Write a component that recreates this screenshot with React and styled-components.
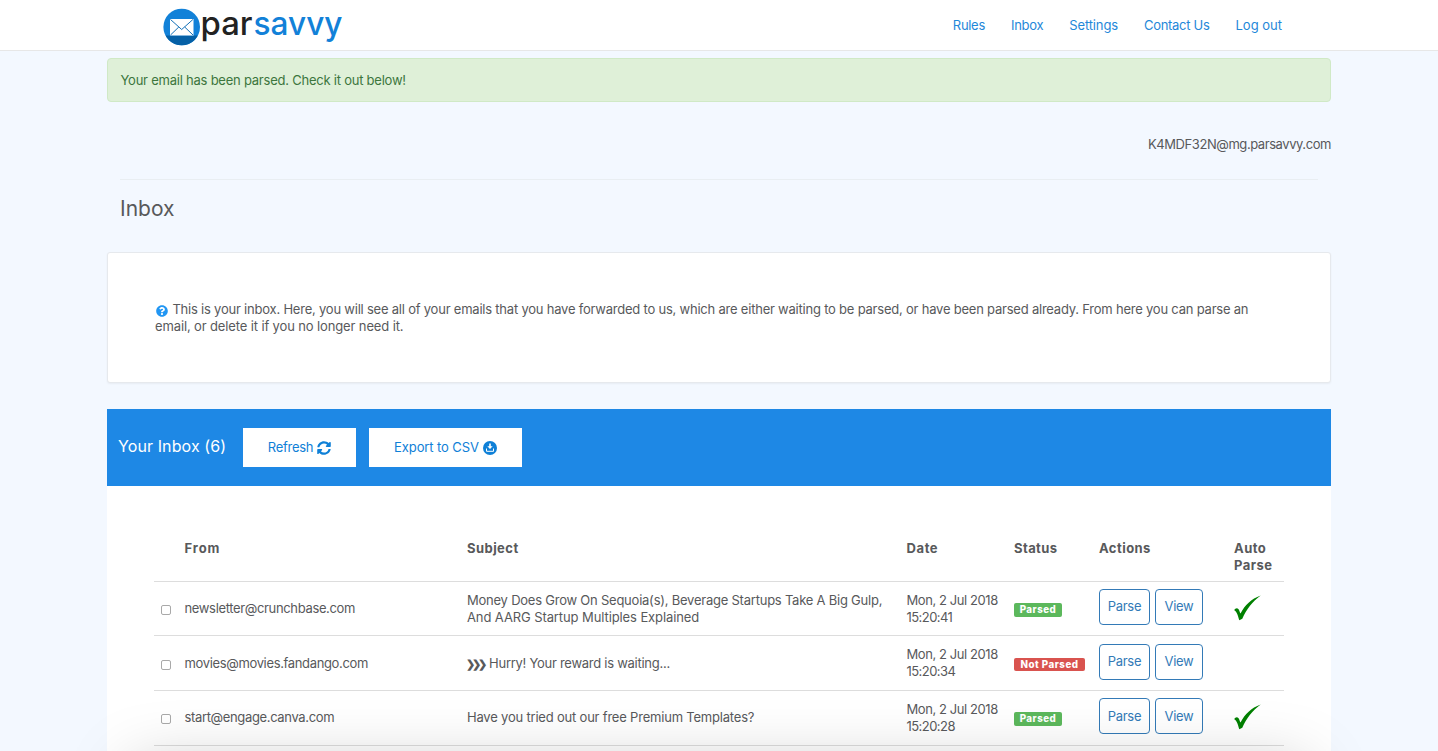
import React from 'react';
import styled, { createGlobalStyle } from 'styled-components';
import { FaSyncAlt, FaQuestionCircle } from 'react-icons/fa';

const GlobalStyle = createGlobalStyle`
* {
  box-sizing: border-box;
}
html, body, #root {
  height: 100%;
}
body {
  margin: 0;
  overflow: hidden;
  background: #f3f8ff;
  color: #58595b;
  font-family: Inter, "Liberation Sans", sans-serif;
  font-size: 13px;
  line-height: 17px;
}
`;

const Page = styled.div`
  position: relative;
  height: 751px;
  overflow: hidden;
`;

const Navbar = styled.nav`
  height: 51px;
  background: #fff;
  border-bottom: 1px solid #e7e7e7;
  display: flex;
  justify-content: space-between;
  padding: 0 156px 0 162px;
`;

const Logo = styled.svg`
  display: block;
  width: 184px;
  height: 50px;
  overflow: visible;
  font-family: Inter, sans-serif;
  font-size: 32.5px;
  font-weight: 500;
`;

const NavLinks = styled.div`
  display: flex;
  gap: 26px;
  padding-top: 17px;
`;

const NavLink = styled.a`
  color: #1f88d9;
  text-decoration: none;
  white-space: nowrap;
  letter-spacing: ${p => p.$ls || 0}px;
`;

const Content = styled.main`
  width: 1224px;
  margin: 7px auto 0;
`;

const Alert = styled.div`
  height: 44px;
  padding: 13px 12.5px;
  border: 1px solid #d0e9c6;
  border-radius: 4px;
  background: #dff0d8;
  color: #3c763d;
  letter-spacing: -.23px;
`;

const Address = styled.div`
  margin-top: 34px;
  text-align: right;
  letter-spacing: -.43px;
`;

const Divider = styled.hr`
  margin: 26px 13px 0;
  border: 0;
  border-top: 1px solid #e9eef2;
`;

const Title = styled.h1`
  margin: 17px 13px 0;
  font-size: 21px;
  line-height: 24px;
  font-weight: 400;
`;

const Panel = styled.section`
  height: 131px;
  margin-top: 31px;
  padding: 48px 47px;
  background: #fff;
  border: 1px solid #e6e9ed;
  border-radius: 3px;
  box-shadow: 0 1px 2px rgba(0, 0, 0, .05);
  svg {
    color: #2196f3;
    font-size: 12px;
    margin: 0 1px;
    vertical-align: -3px;
  }
`;

const Line = styled.div`
  white-space: nowrap;
  letter-spacing: ${p => p.$ls || 0}px;
`;

const Toolbar = styled.header`
  display: flex;
  align-items: center;
  height: 77px;
  margin-top: 26px;
  padding-left: 11px;
  background: #1e88e5;
  h2 {
    width: 125px;
    margin: 0 0 2px;
    color: #fff;
    font-size: 16px;
    font-weight: 400;
    letter-spacing: .1px;
    white-space: nowrap;
  }
`;

const ToolButton = styled.button`
  display: flex;
  align-items: center;
  justify-content: center;
  gap: 4px;
  width: ${p => p.$width}px;
  height: 39px;
  margin-right: 13px;
  padding: 0 0 1px;
  border: 0;
  background: #fff;
  color: #0f80d7;
  font: inherit;
  letter-spacing: ${p => p.$ls || 0}px;
  svg {
    margin-top: 2px;
  }
`;

const List = styled.div`
  height: 400px;
  padding: 54px 47px 0;
  background: #fff;
`;

const Row = styled.div`
  display: grid;
  grid-template-columns: 30.5px 282.5px 439.5px 107.5px 85px 135px 50px;
  align-items: center;
  height: 54.7px;
  border-top: 1px solid #ddd;
`;

const HeadRow = styled(Row)`
  align-items: start;
  height: 40.7px;
  border-top: 0;
  font-weight: 700;
`;

const Cell = styled.div`
  white-space: nowrap;
  letter-spacing: ${p => p.$ls || 0}px;
`;

const Chevrons = styled.b`
  margin: 0 2px 0 -1px;
  font-size: 11px;
  line-height: 11px;
  letter-spacing: -3.1px;
`;

const Check = styled.input`
  appearance: none;
  display: block;
  width: 10px;
  height: 10px;
  margin: 3px 0 0 7px;
  border: 1px solid #a9a9a9;
  border-radius: 2px;
  background: #fff;
`;

const Badge = styled.span`
  display: block;
  width: ${p => (p.$parsed ? 48 : 71)}px;
  height: ${p => (p.$parsed ? 14 : 13)}px;
  margin-top: 3px;
  border-radius: 2px;
  background: ${p => (p.$parsed ? '#5cb85c' : '#d9534f')};
  color: #fff;
  font-size: 9.75px;
  font-weight: 800;
  letter-spacing: .5px;
  line-height: 14px;
  text-align: center;
  white-space: nowrap;
`;

const Actions = styled.div`
  display: flex;
  gap: 5px;
  margin-top: -3.4px;
`;

const ActionButton = styled.button`
  width: ${p => p.$width}px;
  height: 36px;
  padding: 0;
  border: 1px solid #337ab7;
  border-radius: 4px;
  background: #fff;
  color: #337ab7;
  font: inherit;
  letter-spacing: -.3px;
`;

const TickIcon = styled.svg`
  margin-top: -1px;
`;

// shadow thrown up by the bar under the fold
const FoldShadow = styled.div`
  position: absolute;
  top: 769px;
  left: 133px;
  width: 1172px;
  height: 60px;
  box-shadow: 0 0 66px rgba(0, 0, 0, .25);
`;

const links = [
  { text: 'Rules', ls: -.3 },
  { text: 'Inbox', ls: -.3 },
  { text: 'Settings', ls: -.12 },
  { text: 'Contact Us', ls: -.3 },
  { text: 'Log out', ls: 0 },
];

const messages = [
  {
    from: 'newsletter@crunchbase.com',
    subject: <><Line $ls={-.23}>Money Does Grow On Sequoia(s), Beverage Startups Take A Big Gulp,</Line><Line $ls={-.1}>And AARG Startup Multiples Explained</Line></>,
    time: '15:20:41',
    parsed: true
  },
  {
    from: 'movies@movies.fandango.com',
    subject: <Line $ls={-.27}><Chevrons>❯❯❯</Chevrons> Hurry! Your reward is waiting...</Line>,
    time: '15:20:34',
    parsed: false
  },
  {
    from: 'start@engage.canva.com',
    subject: <Line $ls={-.2}>Have you tried out our free Premium Templates?</Line>,
    time: '15:20:28',
    parsed: true
  },
];

const DownloadIcon = () => (
  <svg width="14" height="14" viewBox="0 0 14 14">
    <circle cx="7" cy="7" r="7" fill="#0f80d7" />
    <path d="M6.200 2.500h1.600v2.800h1.900L7 8 4.300 5.300h1.900z" fill="#fff" />
    <path d="M3.500 7.500v2.800h7V7.500" fill="none" stroke="#fff" strokeWidth="1" />
  </svg>
);

const Tick = () => (
  <TickIcon width="28" height="26" viewBox="0 0 28 26">
    <path d="M0.300 15.200C1 13.500 3 12.800 4.300 13.900C5.200 14.700 5.700 17 6.500 18.600C11 10 17 4.200 26.700.6C18 7 12.500 14.500 8.300 23.800L5.300 25.300C4.200 21.500 3.200 17 .3 15.200Z" fill="#008000" />
  </TickIcon>
);

const App = () => {
  return (
    <Page>
      <GlobalStyle />
      <Navbar>
        <Logo viewBox="0 0 184 50">
          <clipPath id="disc"><circle cx="19.700" cy="27" r="18.300" /></clipPath>
          <circle cx="19.700" cy="27" r="18.300" fill="#1281d8" />
          <rect x="0" y="35.500" width="40" height="12" fill="#0560a6" clipPath="url(#disc)" />
          <rect x="8" y="19" width="23.500" height="16.500" fill="#fff" />
          <path d="M8.500 19.500l11.200 10 11.200-10M8.500 35l8.300-8M31 35l-8.300-8" fill="none" stroke="#1270b8" strokeWidth="1" />
          <text x="38.500" y="34.500" textLength="52" lengthAdjust="spacingAndGlyphs" fill="#222">par</text>
          <text x="91.500" y="34.500" textLength="89" lengthAdjust="spacingAndGlyphs" fill="#1281d8">savvy</text>
        </Logo>
        <NavLinks>
          {links.map(l => <NavLink key={l.text} $ls={l.ls}>{l.text}</NavLink>)}
        </NavLinks>
      </Navbar>
      <Content>
        <Alert>Your email has been parsed. Check it out below!</Alert>
        <Address>K4MDF32N@mg.parsavvy.com</Address>
        <Divider />
        <Title>Inbox</Title>
        <Panel>
          <Line $ls={-.217}>
            <FaQuestionCircle /> This is your inbox. Here, you will see all of your emails that you have forwarded to us, which are either waiting to be parsed, or have been parsed already. From here you can parse an
          </Line>
          <Line $ls={-.13}>email, or delete it if you no longer need it.</Line>
        </Panel>
        <Toolbar>
          <h2>Your Inbox (6)</h2>
          <ToolButton $width={113} $ls={-.3}>Refresh <FaSyncAlt size={14} /></ToolButton>
          <ToolButton $width={153} $ls={-.1}>Export to CSV <DownloadIcon /></ToolButton>
        </Toolbar>
        <List>
          <HeadRow>
            <Cell />
            <Cell $ls={.9}>From</Cell>
            <Cell $ls={.45}>Subject</Cell>
            <Cell $ls={.6}>Date</Cell>
            <Cell $ls={.4}>Status</Cell>
            <Cell $ls={.45}>Actions</Cell>
            <Cell $ls={.45}>Auto<br />Parse</Cell>
          </HeadRow>
          {messages.map(m => (
            <Row key={m.from}>
              <Check type="checkbox" />
              <Cell $ls={-.35}>{m.from}</Cell>
              <Cell>{m.subject}</Cell>
              <Cell>
                <Line $ls={-.42}>Mon, 2 Jul 2018</Line>
                <Line $ls={-.55}>{m.time}</Line>
              </Cell>
              <Badge $parsed={m.parsed}>{m.parsed ? 'Parsed' : 'Not Parsed'}</Badge>
              <Actions>
                <ActionButton $width={51}>Parse</ActionButton>
                <ActionButton $width={48}>View</ActionButton>
              </Actions>
              {m.parsed && <Tick />}
            </Row>
          ))}
          <Row />
        </List>
      </Content>
      <FoldShadow />
    </Page>
  )
}
export default App;
